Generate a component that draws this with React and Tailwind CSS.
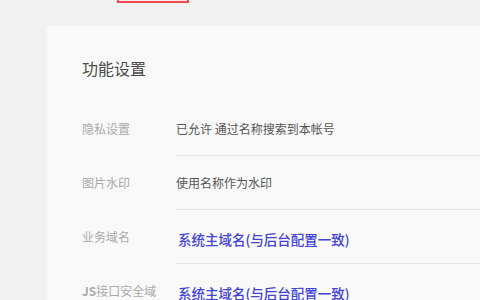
export default function App() {
  const rows = [
    { label: '隐私设置', value: '已允许 通过名称搜索到本帐号' },
    { label: '图片水印', value: '使用名称作为水印' },
    { label: '业务域名', value: '系统主域名(与后台配置一致)', link: true },
    { label: 'JS接口安全域', value: '系统主域名(与后台配置一致)', link: true },
  ]

  return (
    <div
      className="w-[480px] h-[300px] overflow-hidden bg-[#f0f1f3]"
      style={{ fontFamily: '"Noto Sans CJK SC", "Noto Sans", sans-serif' }}
    >
      <div className="h-[26px] pl-[117px]">
        <div className="w-[72px] h-[3px] bg-[#fbeaea] border-2 border-t-0 border-[#f24a4a]" />
      </div>

      <div className="ml-[47px] h-[274px] bg-[#f9f9f9] rounded-tl-[3px] pl-[35px] pt-[31px]">
        <h2 className="text-[16px] leading-[22px] text-[#4a4a4a] mb-[23px]">功能设置</h2>

        {rows.map((r, i) => (
          <div key={i} className="flex h-[54px]">
            <div className="w-[94px] shrink-0 flex items-center text-[12px] text-[#aaaaaa]">
              {r.label.startsWith('JS') ? (
                <span>
                  <span className="font-semibold">JS</span>
                  {r.label.slice(2)}
                </span>
              ) : (
                r.label
              )}
            </div>
            <div
              className={`flex-1 flex items-center ${i < 3 ? 'border-b border-[#e6e6e6]' : ''} ${
                r.link ? 'text-[13.5px] font-medium text-[#4343d6] pt-[5px] pl-[2px]' : 'text-[12px] text-[#555]'
              }`}
            >
              {r.value}
            </div>
          </div>
        ))}
      </div>
    </div>
  )
}
